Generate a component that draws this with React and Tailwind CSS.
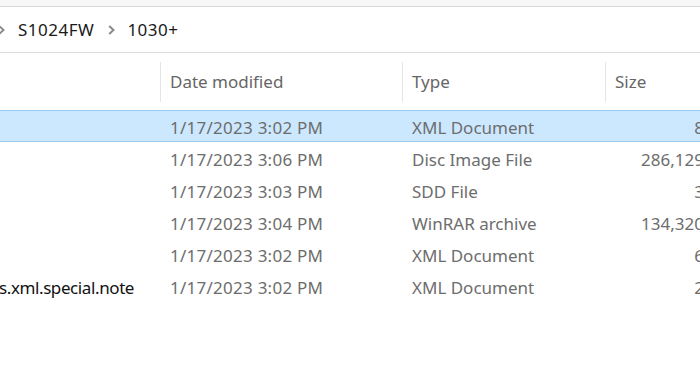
import React from "react";

const Chevron = ({ className = "" }) => (
  <svg width="7" height="10" viewBox="0 0 7 10" className={className}>
    <path d="M1.2 1 L5.5 5 L1.2 9" fill="none" stroke="#8a8a8a" strokeWidth="2" />
  </svg>
);

const rows = [
  { name: "", date: "1/17/2023 3:02 PM", type: "XML Document", size: "8 KB", sel: true },
  { name: "", date: "1/17/2023 3:06 PM", type: "Disc Image File", size: "286,129 KB" },
  { name: "", date: "1/17/2023 3:03 PM", type: "SDD File", size: "3 KB" },
  { name: "", date: "1/17/2023 3:04 PM", type: "WinRAR archive", size: "134,320 KB" },
  { name: "", date: "1/17/2023 3:02 PM", type: "XML Document", size: "6 KB" },
  { name: "s.xml.special.note", date: "1/17/2023 3:02 PM", type: "XML Document", size: "2 KB" },
];

export default function App() {
  return (
    <div
      className="w-[700px] h-[377px] overflow-hidden bg-white text-[17px]"
      style={{ fontFamily: '"Noto Sans", "Open Sans", sans-serif' }}
    >
      <div className="h-[6px] bg-[#f7f7f7]" />
      <div className="h-px bg-[#d9d9d9]" />
      <div className="h-[45px] flex items-center text-[#1a1a1a] tracking-[0.5px]">
        <Chevron className="-ml-[2px] mr-[13px]" />
        <span>S1024FW</span>
        <Chevron className="ml-[14px] mr-[12px]" />
        <span>1030+</span>
      </div>
      <div className="h-px bg-[#dcdcdc]" />
      <div className="h-[57px] flex items-center w-[740px] text-[#666666]">
        <div className="w-[160px] h-[40px]" />
        <div className="w-[242px] h-[40px] border-l border-[#e5e5e5] flex items-center pl-[9px]">Date modified</div>
        <div className="w-[203px] h-[40px] border-l border-[#e5e5e5] flex items-center pl-[9px]">Type</div>
        <div className="w-[135px] h-[40px] border-l border-[#e5e5e5] flex items-center pl-[9px]">Size</div>
      </div>
      {rows.map((r, i) => (
        <div
          key={i}
          className={`h-[32px] w-[740px] flex items-center pt-[4px] ${
            r.sel ? "bg-[#cce8ff] border-y border-[#99c9ef]" : ""
          }`}
        >
          <div className="w-[160px] overflow-hidden">
            <div className="-ml-[1px] text-[#111111] whitespace-nowrap tracking-[-0.4px]">{r.name}</div>
          </div>
          <div className="w-[242px] pl-[10px] text-[#6d6d6d] whitespace-nowrap tracking-[0.25px]">{r.date}</div>
          <div className="w-[203px] pl-[10px] text-[#6d6d6d] whitespace-nowrap">{r.type}</div>
          <div className="w-[135px] pr-[10px] text-right text-[#6d6d6d] whitespace-nowrap">{r.size}</div>
        </div>
      ))}
    </div>
  );
}
